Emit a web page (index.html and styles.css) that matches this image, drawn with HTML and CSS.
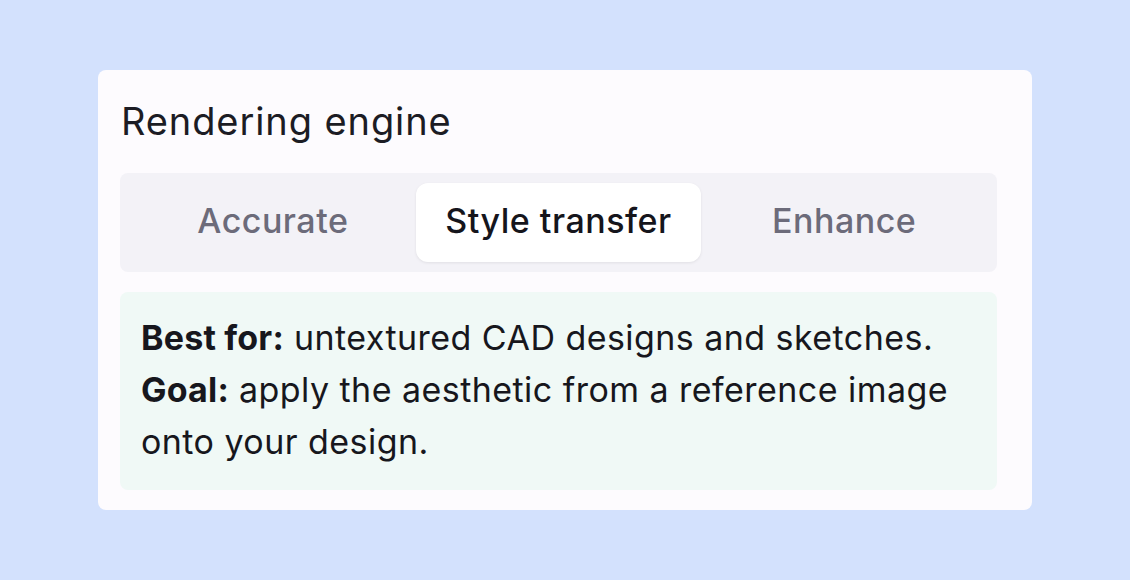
FILE: index.html
```html
<!DOCTYPE html>
<html>
<head>
<meta charset="utf-8">
<link rel="stylesheet" href="styles.css">
</head>
<body>
<div class="card">
  <h2 class="title">Rendering engine</h2>
  <div class="tabs">
    <div class="tab">Accurate</div>
    <div class="tab active">Style transfer</div>
    <div class="tab">Enhance</div>
  </div>
  <div class="info">
    <p><b>Best for:</b> untextured CAD designs and sketches.</p>
    <p><b>Goal:</b> apply the aesthetic from a reference image<br>onto your design.</p>
  </div>
</div>
</body>
</html>
```
FILE: styles.css
```css
html, body {
  margin: 0;
  padding: 0;
}
body {
  width: 1130px;
  height: 580px;
  background: #d3e1fd;
  font-family: Inter, "Noto Sans", sans-serif;
  padding: 70px 0 0 98px;
  box-sizing: border-box;
}
.card {
  width: 934px;
  height: 440px;
  box-sizing: border-box;
  background: #fdfbfe;
  border-radius: 8px;
  padding: 0 35px 20px 22px;
  display: flex;
  flex-direction: column;
}
.title {
  margin: 0 0 2px 0;
  padding: 2px 0 0 1px;
  font-weight: 400;
  font-size: 38px;
  letter-spacing: 0.9px;
  color: #1c1c24;
  height: 101px;
  line-height: 99px;
  box-sizing: border-box;
  flex: none;
}
.tabs {
  flex: none;
  background: #f3f2f7;
  border-radius: 8px;
  padding: 10px;
  display: grid;
  grid-template-columns: repeat(3, 1fr);
  height: 99px;
  box-sizing: border-box;
}
.tab {
  display: flex;
  align-items: center;
  justify-content: center;
  font-size: 34px;
  font-weight: 500;
  letter-spacing: 0.5px;
  color: #6c6b7a;
  border-radius: 12px;
  padding-bottom: 5px;
  box-sizing: border-box;
}
.tab.active {
  background: #ffffff;
  color: #15151c;
  box-shadow: 0 1px 3px rgba(0,0,0,0.08);
}
.info {
  margin-top: 20px;
  background: #f0f9f6;
  border-radius: 8px;
  padding: 20px 21px 0 21px;
  flex: 1;
  font-size: 34px;
  letter-spacing: 0.45px;
  line-height: 52px;
  color: #17171d;
}
.info p {
  margin: 0;
}
.info b {
  font-weight: 700;
  letter-spacing: 0.2px;
}
```
